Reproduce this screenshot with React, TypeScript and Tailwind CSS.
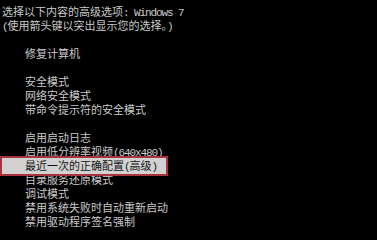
import React from 'react';

const font = { fontFamily: '"Liberation Mono", "Noto Sans CJK SC", monospace' };

interface BootLine {
  text: string;
  indent?: boolean;
  selected?: boolean;
}

// null = blank line in the boot menu
const lines: (BootLine | null)[] = [
  { text: '选择以下内容的高级选项: Windows 7' },
  { text: '(使用箭头键以突出显示您的选择。)' },
  null,
  { text: '修复计算机', indent: true },
  null,
  { text: '安全模式', indent: true },
  { text: '网络安全模式', indent: true },
  { text: '带命令提示符的安全模式', indent: true },
  null,
  { text: '启用启动日志', indent: true },
  { text: '启用低分辨率视频(640x480)', indent: true },
  { text: '最近一次的正确配置(高级)', indent: true, selected: true },
  { text: '目录服务还原模式', indent: true },
  { text: '调试模式', indent: true },
  { text: '禁用系统失败时自动重新启动', indent: true },
  { text: '禁用驱动程序签名强制', indent: true },
];

// boot font draws latin chars at half the CJK width
const BootText = ({ text }: { text: string }) => (
  <>
    {text.split(/([\x00-\x7f]+)/).map((part, i) =>
      /^[\x00-\x7f]+$/.test(part) ? (
        <span key={i} className="tracking-[-1.1px]">
          {part}
        </span>
      ) : (
        <span key={i}>{part}</span>
      )
    )}
  </>
);

export default function App() {
  return (
    <div
      className="w-full h-[240px] bg-black overflow-hidden pt-[6px] pl-[2px] text-[11px] leading-[14px] text-[#cacaca]"
      style={font}
    >
      {lines.map((line, i) => {
        if (!line) return <div key={i} className="h-[14px]" />;
        if (line.selected) {
          return (
            <div
              key={i}
              className="relative -ml-[2px] -mt-[4px] -mb-[2px] w-[168px] h-[20px] border-2 border-[#a8323e] bg-[#d2d2d2] pl-[23px] pt-[2px] text-[#141414] whitespace-nowrap"
            >
              <BootText text={line.text} />
            </div>
          );
        }
        return (
          <div key={i} className={`h-[14px] whitespace-nowrap ${line.indent ? 'pl-[23px]' : ''}`}>
            <BootText text={line.text} />
          </div>
        );
      })}
    </div>
  );
}
